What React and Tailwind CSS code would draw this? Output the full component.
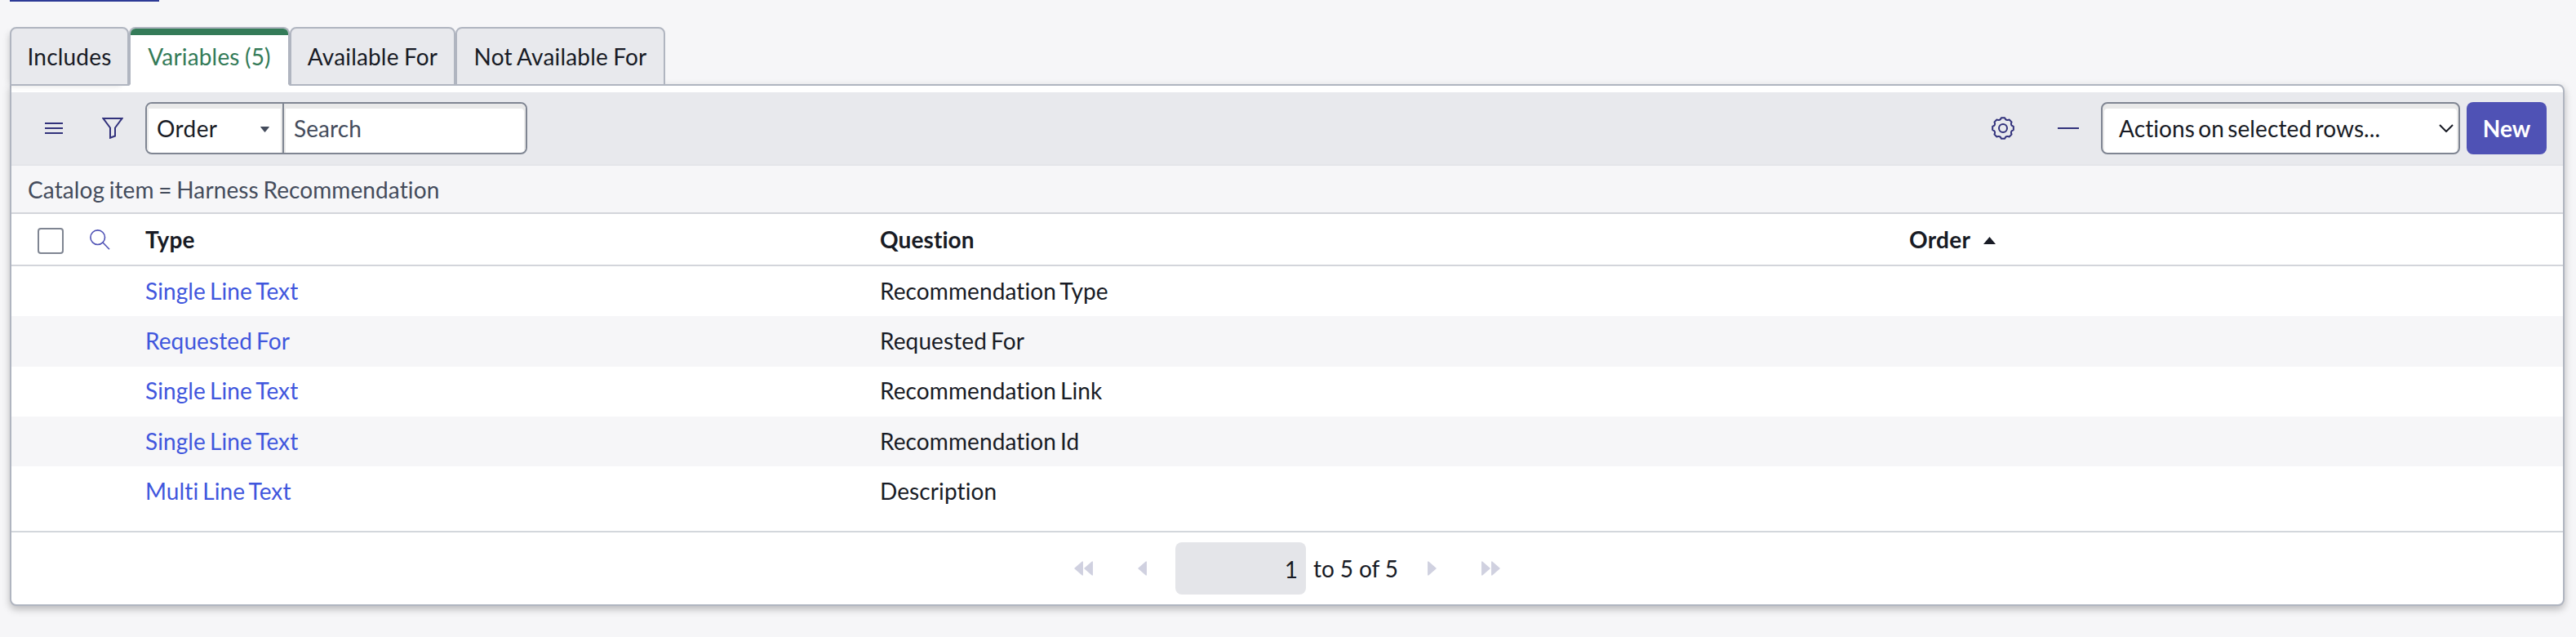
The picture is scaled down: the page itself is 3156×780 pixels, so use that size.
const TABS = [
  { label: "Includes", width: "w-[146px]", edge: "shadow-[-5px_3px_8px_-5px_rgba(0,0,0,0.22)]" },
  { label: "Variables (5)", width: "w-[197px]", active: true },
  { label: "Available For", width: "w-[203px]" },
  { label: "Not Available For", width: "w-[257px]" },
];

const ROWS = [
  ["Single Line Text", "Recommendation Type"],
  ["Requested For", "Requested For"],
  ["Single Line Text", "Recommendation Link"],
  ["Single Line Text", "Recommendation Id"],
  ["Multi Line Text", "Description"],
];

// Outline of the settings cog: eight rounded teeth around a circle.
const GEAR_PATH = (() => {
  const n = 8;
  const pts = [];
  for (let i = 0; i < n; i++) {
    const c = (i * 2 * Math.PI) / n - Math.PI / 2;
    [[-0.27, 11.4], [-0.16, 13], [0.16, 13], [0.27, 11.4]].forEach(([d, r]) => {
      pts.push([14 + r * Math.cos(c + d), 14 + r * Math.sin(c + d)]);
    });
  }
  let out = "";
  pts.forEach(([x, y], i) => {
    const p = `${x.toFixed(2)} ${y.toFixed(2)}`;
    if (i === 0) out += `M${p}`;
    else if (i % 4 === 0) out += `A3 3 0 0 0 ${p}`;
    else out += `L${p}`;
  });
  return `${out}A3 3 0 0 0 ${pts[0][0].toFixed(2)} ${pts[0][1].toFixed(2)}Z`;
})();

function Tab({ label, width, active, edge = "" }) {
  return (
    <div
      className={`${width} ${edge} h-[72px] overflow-hidden rounded-t-lg border-2 border-[#b0b5c0] ${
        active ? "border-b-white bg-white text-[#347b58]" : "bg-[#e8e9ed]"
      }`}
    >
      <div
        className={`flex h-full justify-center whitespace-nowrap pt-4 leading-[36px] tracking-[0.18px] [word-spacing:-1px] ${
          active ? "shadow-[inset_0_8px_0_#347b58]" : ""
        }`}
      >
        {label}
      </div>
    </div>
  );
}

function PageArrow({ double, flip }) {
  return (
    <svg
      className={`h-[18px] shrink-0 ${double ? "w-[23px]" : "w-[11px]"} ${flip ? "-scale-x-100" : ""}`}
      viewBox={double ? "0 0 23 18" : "0 0 11 18"}
      fill="#d0d1e0"
      stroke="#d0d1e0"
      strokeWidth="1.5"
      strokeLinejoin="round"
    >
      <path d="M10.2 1V17L1 9Z" />
      {double && <path d="M22.2 1V17L13 9Z" />}
    </svg>
  );
}

export default function App() {
  return (
    <div className="h-[780px] w-[3156px] overflow-hidden bg-[#f6f6f8] pl-3 font-['Lato',sans-serif] text-[28px] leading-[36px] tracking-[0.1px] text-[#181b25] [font-variant-ligatures:none] [word-spacing:-2.2px]">
      <div className="h-[2px] w-[183px] bg-[#2d3a96]" />
      <div className="pt-[31px]">
        <div className="relative z-10 -mb-[2px] flex">
          {TABS.map((t) => (
            <Tab key={t.label} {...t} />
          ))}
        </div>
        <div className="h-[639px] w-[3130px] rounded-lg rounded-tl-none border-2 border-[#b0b5c0] bg-white pt-2 shadow-[0_4px_10px_rgba(0,0,0,0.25)]">
          <div className="flex h-[90px] items-center border-b-2 border-[#e4e5e9] bg-[#e8e9ed] pl-[41px] pr-5">
            <svg className="h-[14px] w-[22px]" viewBox="0 0 22 14" fill="#32327c">
              <path d="M0 0H22V2H0ZM0 6H22V8H0ZM0 12H22V14H0Z" />
            </svg>
            <svg className="ml-[48px] h-[26px] w-[26px]" viewBox="0 0 26 26" fill="none" stroke="#32327c" strokeWidth="2">
              <path d="M1.5 1H24.5L16 12.5V22.5L10 24.8V12.5Z" />
            </svg>
            <div className="ml-[27px] flex h-[64px] w-[468px] overflow-hidden rounded-lg border-2 border-[#7f8592] bg-white">
              <div className="flex w-[168px] items-center justify-between border-r-2 border-[#7f8592] pl-[12px] pr-4 tracking-[0.4px] shadow-[inset_0_4px_0_2px_#e9e9e9]">
                <span>Order</span>
                <svg className="mt-[2px] h-[7px] w-[11px]" viewBox="0 0 11 7" fill="#444c5c">
                  <path d="M0.5 0H10.5Q11 .3 10.7 .8L6 6.6Q5.5 7 5 6.6L.3 .8Q0 .3 .5 0Z" />
                </svg>
              </div>
              <div className="flex flex-1 items-center rounded-r-md pl-[12px] text-[#444c5c] shadow-[inset_0_4px_0_2px_#e9e9e9]">
                Search
              </div>
            </div>
            <svg className="ml-auto h-[28px] w-[28px]" viewBox="0 0 28 28" fill="none" stroke="#32327c" strokeWidth="2" strokeLinejoin="round">
              <path d={GEAR_PATH} />
              <circle cx="14" cy="14" r="5" />
            </svg>
            <div className="ml-[53px] h-[2px] w-[26px] bg-[#32327c]" />
            <div className="ml-[27px] flex h-[64px] w-[440px] items-center justify-between rounded-lg border-2 border-[#7f8592] bg-white pl-5 pr-[6px] shadow-[inset_0_4px_0_2px_#e9e9e9]">
              <span className="[word-spacing:-3px]">Actions on selected rows...</span>
              <svg className="h-[10px] w-[18px]" viewBox="0 0 18 10" fill="none" stroke="#181b25" strokeWidth="2">
                <path d="M1 1L9 9L17 1" />
              </svg>
            </div>
            <div className="ml-2 flex h-[64px] w-[98px] items-center justify-center rounded-lg bg-[#4f52b5] font-bold text-white">
              New
            </div>
          </div>
          <div className="flex h-[59px] items-center border-b-2 border-[#d3d5db] bg-[#f6f6f8] pl-5 text-[#444c5c] [word-spacing:-1.6px]">
            Catalog item = Harness Recommendation
          </div>
          <div className="flex h-[64px] items-center border-b-2 border-[#d3d5db] font-bold">
            <div className="ml-8 mt-1 h-[32px] w-[32px] rounded border-2 border-[#7f8592] bg-white" />
            <svg className="ml-8 h-[25px] w-[25px]" viewBox="0 0 25 25" fill="none" stroke="#4f52b5" strokeWidth="1.6">
              <circle cx="9.7" cy="9.7" r="8.8" />
              <path d="M16 16L24 24.2" />
            </svg>
            <div className="ml-[43px] w-[900px]">Type</div>
            <div className="w-[1261px]">Question</div>
            <div className="w-[91px] tracking-[0.3px]">Order</div>
            <svg className="mt-[2px] h-[9px] w-[15px]" viewBox="0 0 15 9" fill="#181b25">
              <path d="M7.5 0L15 9H0Z" />
            </svg>
          </div>
          <div className="h-[326px] border-b-2 border-[#d3d7dc]">
            {ROWS.map(([type, question], i) => (
              <div key={i} className={`flex h-[61.3px] items-center pb-[2px] pl-[164px] ${i % 2 ? "bg-[#f6f6f8]" : "bg-white"}`}>
                <div className="w-[900px] text-[#4056dd]">{type}</div>
                <div>{question}</div>
              </div>
            ))}
          </div>
          <div className="flex h-[88px] items-center pl-[1302px]">
            <PageArrow double />
            <div className="w-[55px]" />
            <PageArrow />
            <div className="ml-[35px] flex h-[64px] w-[160px] items-center justify-end rounded-lg bg-[#e4e5e9] pr-[10px] pt-[2px]">
              1
            </div>
            <div className="ml-[9px] w-[140px] whitespace-nowrap [word-spacing:-0.5px]">to 5 of 5</div>
            <PageArrow flip />
            <div className="w-[55px]" />
            <PageArrow double flip />
          </div>
        </div>
      </div>
    </div>
  );
}
